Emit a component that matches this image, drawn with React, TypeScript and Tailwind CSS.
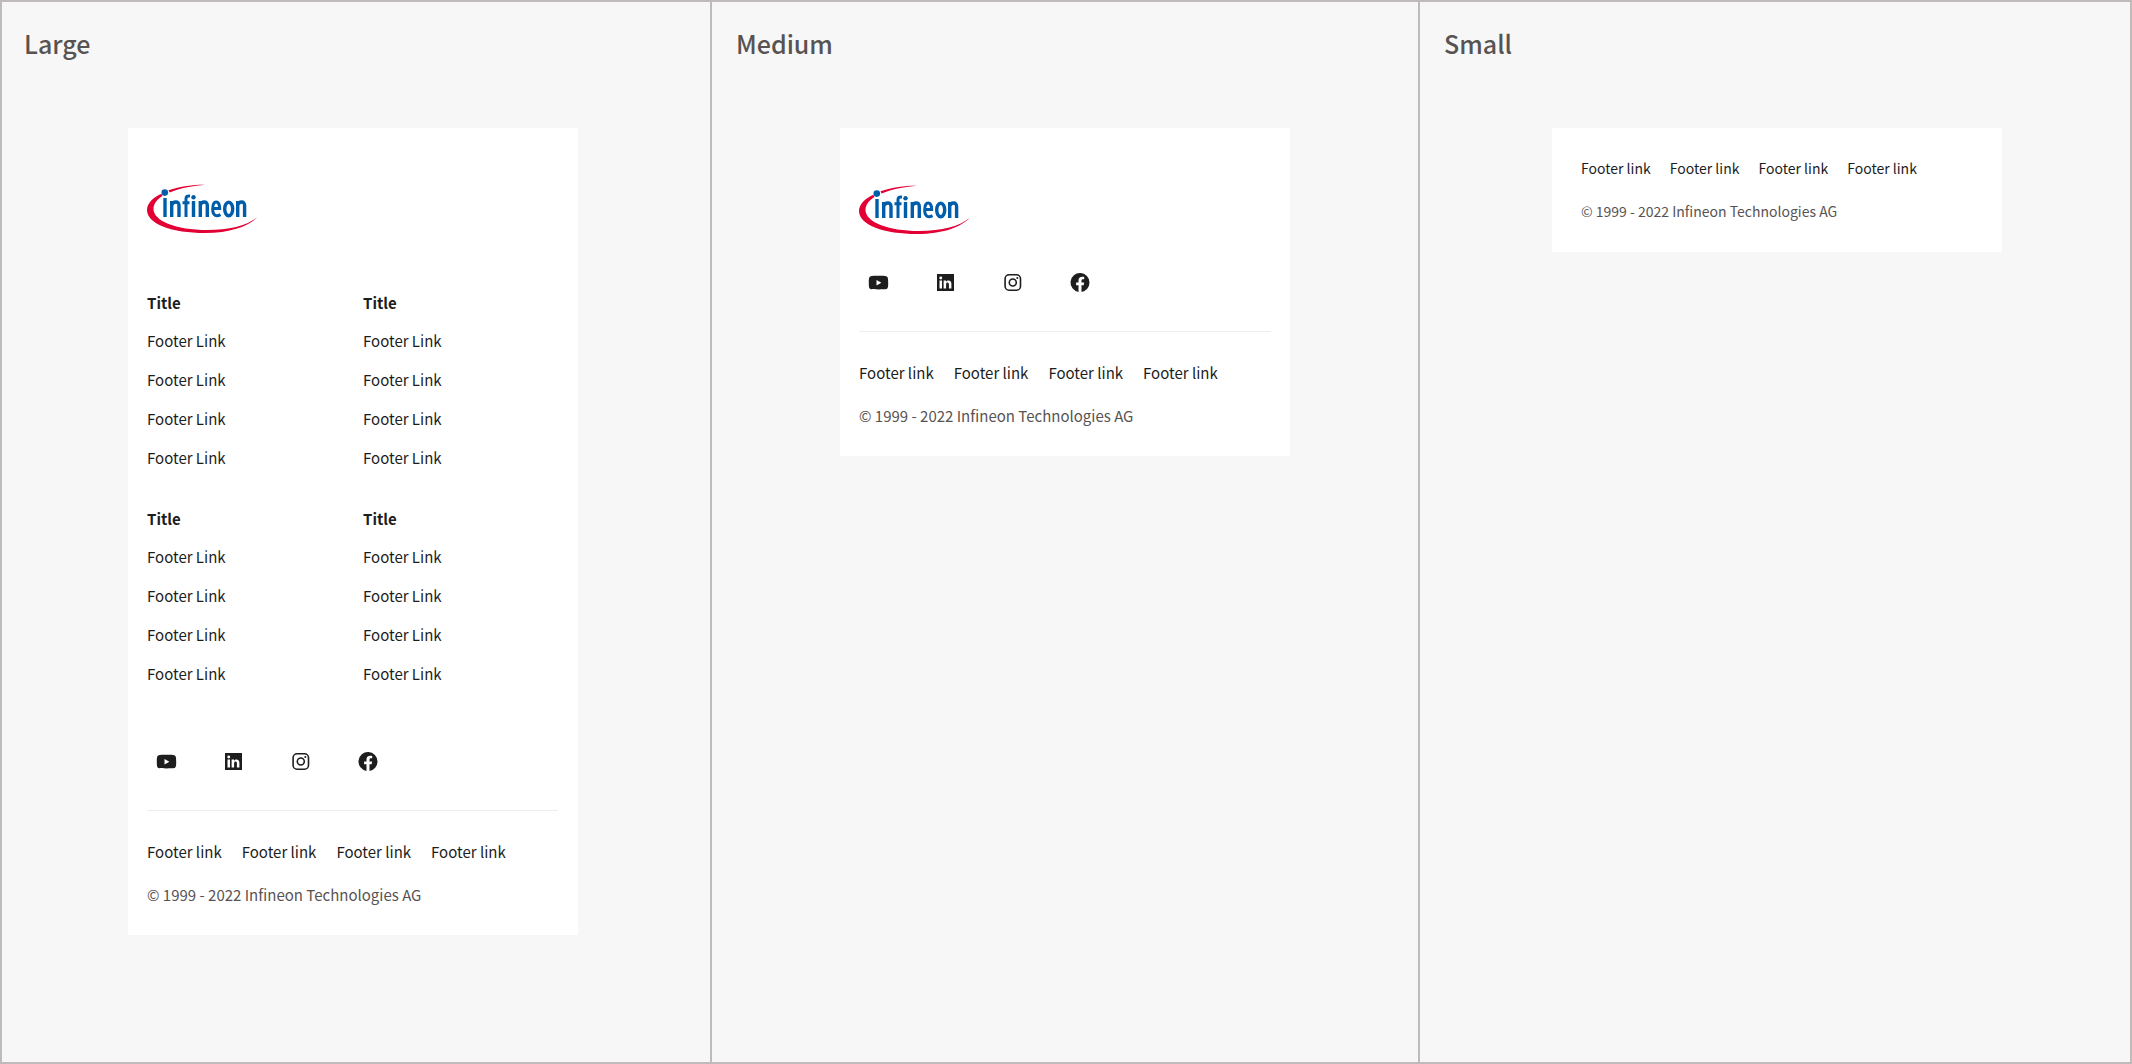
import type { ReactNode } from "react";

const FONT = "font-['Noto_Sans_CJK_SC',sans-serif]";

function Logo() {
  return (
    <svg viewBox="0 0 111 50" className="block h-[50px] w-[111px]" role="img" aria-label="Infineon">
      <path
        d="M58 .7C50 .4 34 1.600 21.500 6.300L22.600 8.400C33 4 47 1.700 58 .7ZM14.300 9.700C6 13.800 0 19 0 26C0 40 25 49 58 49C84 49 102 42 110.500 33C101 41 83 46 60 46C29 46 6.500 37 6.500 25C6.500 19.500 10 15.500 15.500 12Z"
        fill="#e30034"
      />
      <circle cx="17.800" cy="8.600" r="3.300" fill="#005daa" />
      <circle cx="46.500" cy="13.200" r="2.200" fill="#005daa" />
      <g stroke="#005daa" strokeWidth="3.400" fill="none">
        <path d="M18 14V33" />
        <path d="M24.700 33V17M24.700 21C26 17.500 32 16.500 32 21.500V33" />
        <path d="M39 33V14.500Q39 11.500 43 12M35.500 18.700H42.500" strokeWidth="3" />
        <path d="M46.500 17V33" />
        <path d="M53.300 33V17M53.300 21C54.500 17.500 60.300 16.500 60.300 21.500V33" />
        <path d="M65.500 24.500H72.700C72.900 15.800 65.700 15.800 65.700 25C65.700 32.500 70 32.500 73.500 30.600" strokeWidth="3" />
        <ellipse cx="81.700" cy="25" rx="4" ry="6.800" />
        <path d="M90.700 33V17M90.700 21C92 17.500 97.600 16.500 97.600 21.500V33" />
      </g>
    </svg>
  );
}

const socials: { name: string; icon: ReactNode }[] = [
  {
    name: "YouTube",
    icon: (
      <path
        fillRule="evenodd"
        d="M18.200 4.200C16.500 3.700 4.500 3.700 2.800 4.200C1.200 4.700 .8 6 .8 10.700C.8 15.400 1.200 16.600 2.800 17.100C4.500 17.600 16.500 17.600 18.200 17.100C19.800 16.600 20.200 15.400 20.200 10.700C20.200 6 19.800 4.700 18.200 4.200ZM8.500 7.900V13.500L13.400 10.700Z"
      />
    ),
  },
  {
    name: "LinkedIn",
    icon: (
      <path
        fillRule="evenodd"
        d="M2 2H19V19H2ZM4.500 8.500V16.500H7V8.500ZM5.750 4.600A1.450 1.450 0 1 0 5.750 7.500A1.450 1.450 0 1 0 5.750 4.600ZM8.600 8.500V16.500H11.100V12.400C11.100 10 13.900 10 13.900 12.400V16.500H16.400V11.800C16.400 7.900 12.400 7.600 11 9.700V8.500Z"
      />
    ),
  },
  {
    name: "Instagram",
    icon: (
      <g>
        <rect x="3.100" y="2.800" width="15.400" height="15.400" rx="4" fill="none" stroke="currentColor" strokeWidth="1.600" />
        <circle cx="10.800" cy="10.500" r="3.500" fill="none" stroke="currentColor" strokeWidth="1.600" />
        <circle cx="15.300" cy="6" r="1" />
      </g>
    ),
  },
  {
    name: "Facebook",
    icon: (
      <path d="M20.500 10.500A9.500 9.500 0 1 0 9.500 19.900V13.300H7.100V10.500H9.500V8.400C9.500 6 10.900 4.700 13.100 4.700C14.100 4.700 15.200 4.900 15.200 4.900V7.200H14C12.800 7.200 12.500 7.900 12.500 8.700V10.500H15.100L14.700 13.300H12.500V19.900A9.500 9.500 0 0 0 20.500 10.500Z" />
    ),
  },
];

function Socials() {
  return (
    <ul className="flex gap-[45px] pl-[9px]">
      {socials.map((s) => (
        <li key={s.name}>
          <a href="#" aria-label={s.name} className="block text-[#1d1d1d]">
            <svg viewBox="0 0 22 22" className="block size-[22px]" fill="currentColor">
              {s.icon}
            </svg>
          </a>
        </li>
      ))}
    </ul>
  );
}

function LinkColumn() {
  return (
    <div>
      <h3 className="mb-4 font-bold">Title</h3>
      <ul className="flex flex-col gap-[17px]">
        {[1, 2, 3, 4].map((n) => (
          <li key={n} className="leading-[22px]">
            <a href="#">Footer Link</a>
          </li>
        ))}
      </ul>
    </div>
  );
}

function Legal({ gap = "gap-x-5" }: { gap?: string }) {
  return (
    <div>
      <ul className={`flex flex-wrap ${gap}`}>
        {[1, 2, 3, 4].map((n) => (
          <li key={n}>
            <a href="#">Footer link</a>
          </li>
        ))}
      </ul>
      <p className="mt-[21px] text-[#575352]">© 1999 - 2022 Infineon Technologies AG</p>
    </div>
  );
}

const heading = "pt-[23px] text-[25px] leading-9 font-medium text-[#575352]";

export default function App() {
  return (
    <main
      className={`${FONT} grid min-h-screen grid-cols-[710fr_708fr_710fr] border-2 border-[#bfbbbb] bg-[#f7f7f7] text-[15px] leading-[22px] text-[#1d1d1d]`}
    >
      <section className="border-r-2 border-[#bfbbbb]">
        <h2 className={`pl-[22px] ${heading}`}>Large</h2>
        <footer className="mt-[67px] ml-[126px] max-w-[450px] bg-white pr-5 pl-[19px] pt-14 pb-[29px]">
          <Logo />
          <div className="mt-[58px] grid grid-cols-[216px_1fr] gap-y-[39px]">
            {[1, 2, 3, 4].map((n) => (
              <LinkColumn key={n} />
            ))}
          </div>
          <div className="mt-[66px] border-b border-[#eeeded] pb-[37px]">
            <Socials />
          </div>
          <div className="mt-[30px]">
            <Legal />
          </div>
        </footer>
      </section>
      <section className="border-r-2 border-[#bfbbbb]">
        <h2 className={`pl-6 ${heading}`}>Medium</h2>
        <footer className="mt-[67px] ml-32 max-w-[450px] bg-white px-[19px] pt-[57px] pb-[29px]">
          <Logo />
          <div className="mt-[37px] border-b border-[#eeeded] pb-[37px]">
            <Socials />
          </div>
          <div className="mt-[30px]">
            <Legal />
          </div>
        </footer>
      </section>
      <section>
        <h2 className={`pl-6 ${heading}`}>Small</h2>
        <footer className="mt-[67px] ml-[132px] max-w-[450px] bg-white pr-7 pl-[29px] pt-[29px] pb-[30px] text-[14px]">
          <Legal gap="gap-x-[19px]" />
        </footer>
      </section>
    </main>
  );
}
